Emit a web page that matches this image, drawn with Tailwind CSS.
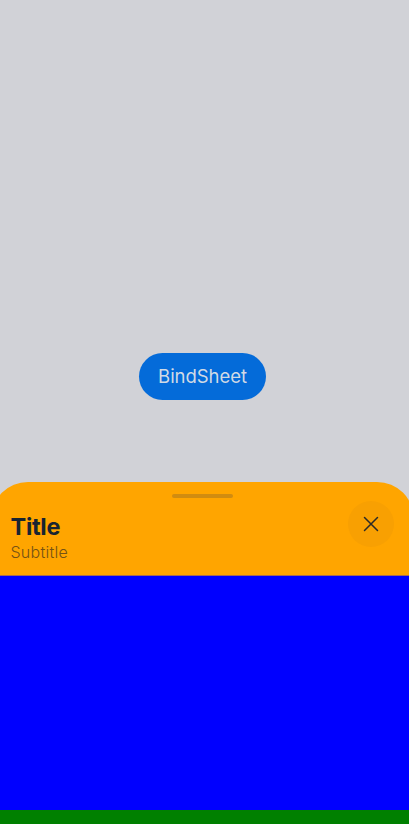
<!DOCTYPE html>
<html lang="en">
<head>
<meta charset="utf-8">
<meta name="viewport" content="width=device-width, initial-scale=1">
<title>BindSheet</title>
<script src="https://cdn.jsdelivr.net/npm/@tailwindcss/browser@4"></script>
</head>
<body class="h-[824px] w-[409px] overflow-hidden bg-[#d1d2d7] font-['Inter','Noto_Sans',sans-serif]">
<div class="flex h-full flex-col">
  <main class="flex h-[482px] shrink-0 items-end pb-[82px] pl-[139px]">
    <button class="flex h-[47px] w-[127px] items-center justify-center rounded-full bg-[#046bd9] text-[18.5px] leading-none tracking-[-0.05px] text-[#d1dae5]">BindSheet</button>
  </main>
  <section class="-ml-[9px] flex w-[423px] grow flex-col overflow-hidden rounded-t-[37px] bg-[#ffa500]">
    <header class="flex h-[94px] shrink-0 flex-col border-b border-[#a66b58]">
      <div class="mt-[11.5px] h-1 w-[61px] self-center rounded-full bg-[#d18c10]"></div>
      <div class="flex justify-between pr-5 pl-[19.5px]">
        <div class="pt-[15px]">
          <h1 class="text-[23.5px] leading-[27px] font-bold tracking-[-0.3px] text-[#182431]">Title</h1>
          <p class="text-[16px] leading-[24px] font-light tracking-[0.25px] text-[#755215]">Subtitle</p>
        </div>
        <button aria-label="Close" class="mt-[3px] flex size-[46px] items-center justify-center rounded-full bg-[#f8a002]">
          <svg class="size-4" viewBox="0 0 16 16" fill="none" stroke="#2b2a28" stroke-width="1.5" stroke-linecap="round"><path d="M1.5 1.5L14.5 14.5M14.5 1.5L1.5 14.5"/></svg>
        </button>
      </div>
    </header>
    <div class="h-[234px] shrink-0 bg-[#0000ff]"></div>
    <div class="grow bg-[#008000]"></div>
  </section>
</div>
</body>
</html>
